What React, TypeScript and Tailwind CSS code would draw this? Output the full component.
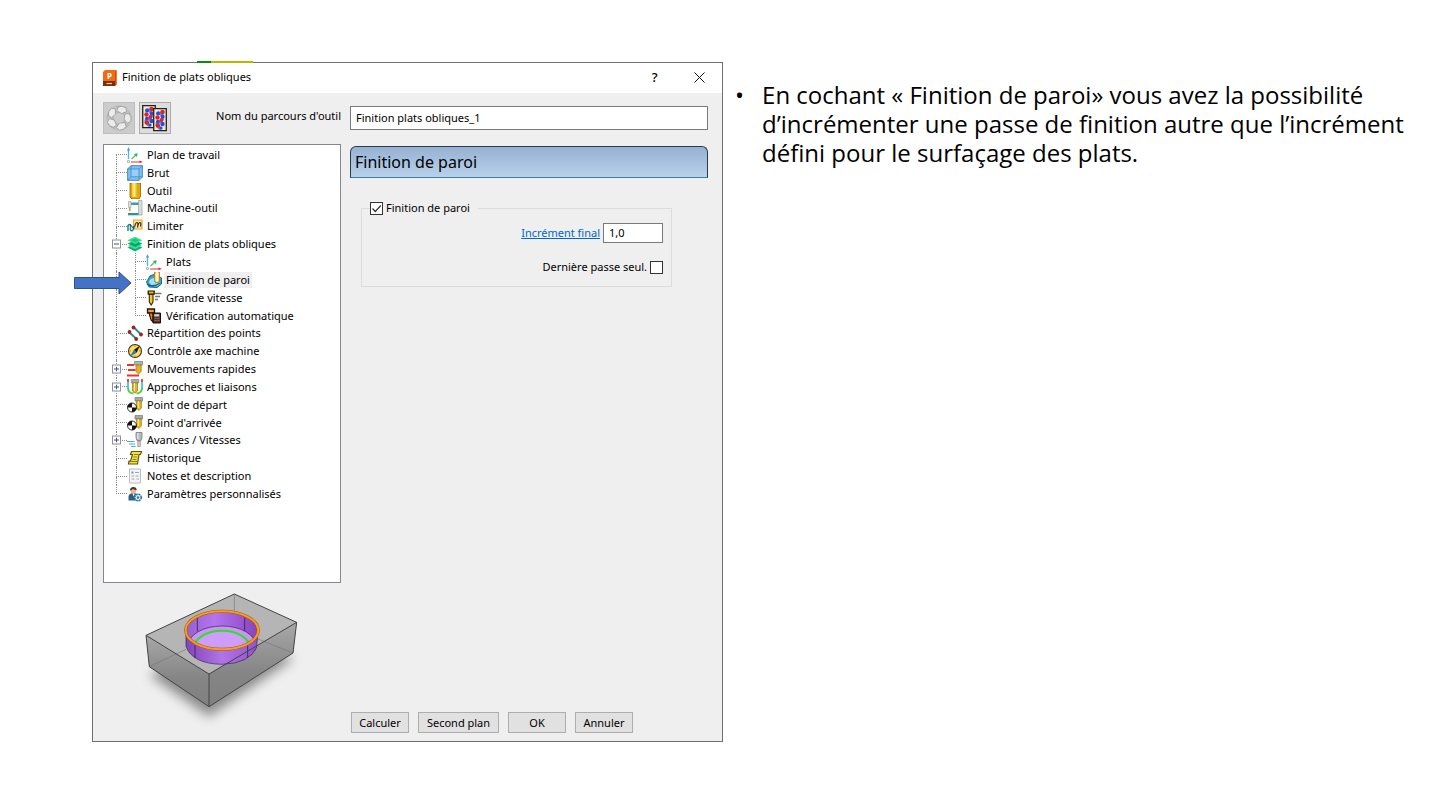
import React, { useState } from "react";

type IconName =
  | "axes" | "block" | "tool" | "machine" | "limit" | "layers" | "wall" | "speed" | "verify"
  | "points" | "compass" | "rapid" | "leads" | "start" | "feeds" | "history" | "notes" | "user";

type Item = {
  label: string;
  icon: IconName;
  level?: 2;
  toggle?: "+" | "-";
  first?: boolean;
  last?: boolean;
  selected?: boolean;
};

const items: Item[] = [
  { label: "Plan de travail", icon: "axes", first: true },
  { label: "Brut", icon: "block" },
  { label: "Outil", icon: "tool" },
  { label: "Machine-outil", icon: "machine" },
  { label: "Limiter", icon: "limit" },
  { label: "Finition de plats obliques", icon: "layers", toggle: "-" },
  { label: "Plats", icon: "axes", level: 2 },
  { label: "Finition de paroi", icon: "wall", level: 2, selected: true },
  { label: "Grande vitesse", icon: "speed", level: 2 },
  { label: "Vérification automatique", icon: "verify", level: 2, last: true },
  { label: "Répartition des points", icon: "points" },
  { label: "Contrôle axe machine", icon: "compass" },
  { label: "Mouvements rapides", icon: "rapid", toggle: "+" },
  { label: "Approches et liaisons", icon: "leads", toggle: "+" },
  { label: "Point de départ", icon: "start" },
  { label: "Point d'arrivée", icon: "start" },
  { label: "Avances / Vitesses", icon: "feeds", toggle: "+" },
  { label: "Historique", icon: "history" },
  { label: "Notes et description", icon: "notes" },
  { label: "Paramètres personnalisés", icon: "user", last: true },
];

const drawings: Record<IconName, React.ReactNode> = {
  axes: (
    <>
      <path d="M1.500 12V2" stroke="#4fb0f2" strokeWidth="1.300" />
      <path d="M0 3.400 1.500.2 3 3.400z" fill="#2f9cea" />
      <path d="M4 15h9" stroke="#f05050" strokeWidth="1.200" />
      <path d="m12.500 13.400 3.500 1.600-3.500 1z" fill="#e02020" />
      <path d="M4.500 12 9 8" stroke="#3cc46c" strokeWidth="1.200" />
      <path d="m7 7 3.800-.8L9.700 10z" fill="#2bb45c" />
      <path d="M.5 13.500h2v2h-2z" fill="#fff" stroke="#aaa" strokeWidth=".8" />
    </>
  ),
  block: (
    <>
      <path d="M.6 4 4 .6h11.400V12L12 15.400H.6z" fill="#7cc0f7" stroke="#3f86bd" strokeWidth=".9" />
      <path d="M4 4h8v8H4z" fill="#98d0fa" />
      <path d="M.6 4H12v11.400M12 4 15.400.8M4 .8v11h11.400M4 11.800.6 15.400" fill="none" stroke="#4a8fc4" strokeWidth=".9" />
    </>
  ),
  tool: (
    <>
      <path d="M3 0h10.500v13.500Q13 16 10.500 16H6q-2.500 0-3-2.500z" fill="#e0a80e" stroke="#8a6508" strokeWidth=".8" />
      <path d="M5 0h4.500v14H6.500Q5 14 5 13z" fill="#f8d23a" />
      <path d="M6.500 0h1.500v13.500H6.500z" fill="#fff0a0" />
    </>
  ),
  machine: (
    <>
      <path d="M11.500.5h3.500V15H11.500z" fill="#d9dcde" stroke="#9a9fa3" strokeWidth=".7" />
      <path d="M4 2.500h7.500V5H4z" fill="#36a0a2" />
      <path d="M1.500 1.500H4v6H1.500z" fill="#e2e2e2" stroke="#999" strokeWidth=".6" />
      <path d="M2 7.500h1.500V11H2z" fill="#e58b2d" />
      <path d="M1 13h10.500v2.300H1z" fill="#2a9698" />
    </>
  ),
  limit: (
    <>
      <path d="M6.500 2h8.500v9H6.500z" fill="#fce3a0" stroke="#eba724" strokeWidth="1.200" />
      <path d="M7.500 9.500q1-5 2.500-5t.5 5q1-5 2.500-5t.5 4" fill="none" stroke="#333" strokeWidth="1.200" />
      <path d="M1 13V7.500q2-2 2.500.5v4q1.500 2 3-1V8" fill="none" stroke="#178c8e" strokeWidth="1.500" />
      <path d="m3 6 4 5" stroke="#334" />
    </>
  ),
  layers: (
    <>
      <path d="m8 8.500 7.500 3L8 15.500.5 11.500z" fill="#12a985" />
      <path d="m8 6.500 7 3.200-7 3.500-7-3.500z" fill="#36e67c" />
      <path d="m8 4.500 7.500 3L8 11 .5 7.500z" fill="#10a07c" />
      <path d="m8 .8 7.500 3.400L8 8 .5 4.200z" fill="#2fe684" />
      <path d="m8 2.500 4 1.700-4 2-4-2z" fill="#1ec489" />
    </>
  ),
  wall: (
    <>
      <path d="M.5 10 4 4l5-2 6.500 4v6L11 15.500 3 15z" fill="#3ba4ce" stroke="#17688e" />
      <path d="M3 10q1-4 6-4v5q4 0 5-2v3q-4 4-9 1z" fill="#a5e1f2" />
      <path d="M1 12q6 4 13-1" fill="none" stroke="#126488" strokeWidth="1.400" />
      <path d="M8.500 0h5v9.500q-2.500 2-5 0z" fill="#f8d878" stroke="#a97712" strokeWidth=".8" />
      <path d="M10.300 0h1.500v9.500h-1.500z" fill="#fff" />
    </>
  ),
  speed: (
    <>
      <path d="M2.200 1h6v3.200h-6z" fill="#e8b920" stroke="#17130a" strokeWidth="1.200" />
      <path d="M3.300 4.500H7v7.500l-1.800 3L3.300 12z" fill="#f4cb20" stroke="#332a0c" strokeWidth="1.100" />
      <path d="M9 3.500h6.500M9 6.500h5M9 9.500h3" stroke="#777" strokeWidth="1.400" />
    </>
  ),
  verify: (
    <>
      <path d="M1.500 1h7v4h-7z" fill="#ff9830" stroke="#1c1712" strokeWidth="1.300" />
      <path d="M3 5h4v9l-2-2z" fill="#f47a20" stroke="#1c1712" strokeWidth="1.100" />
      <path d="M7 5h7.500v10H7z" fill="#413935" stroke="#15110f" />
      <path d="M8.200 6.200h5v2.300h-5z" fill="#d9d4ce" />
      <path d="M8.500 10.500h5m-5 2h5" stroke="#ea573a" strokeWidth="1.100" strokeDasharray="1.200 .7" />
    </>
  ),
  points: (
    <>
      <path d="M2.500 7.500 9 13.500M7 2.500l7 7" stroke="#229396" strokeWidth="2" />
      <circle cx="2.500" cy="7" r="1.900" fill="#a81c22" />
      <circle cx="6.500" cy="2.500" r="1.900" fill="#a81c22" />
      <circle cx="14" cy="9.500" r="1.900" fill="#a81c22" />
      <circle cx="9.200" cy="14" r="1.900" fill="#a81c22" />
    </>
  ),
  compass: (
    <>
      <circle cx="8" cy="8" r="6.500" fill="#ffdc55" stroke="#3a3425" strokeWidth="1.100" />
      <path d="M8 2.600v1M8 12.400v1M2.600 8h1M12.400 8h1" stroke="#8a6a14" />
      <path d="m13 2.500-3.400 7.200L7 6.800z" fill="#181818" />
      <path d="m3 13.500 4-6.700 2.600 2.900z" fill="#2674c5" />
    </>
  ),
  rapid: (
    <>
      <path d="M7.500.5h8v3.500h-8z" fill="#b4b4b4" stroke="#777" strokeWidth=".7" />
      <path d="M9 4h5.200v6.500L11.500 13 9 10.500z" fill="#e5b322" stroke="#92710e" strokeWidth=".7" />
      <path d="M0 4h7M1 9h7.500M0 14.500h12" stroke="#ee3425" strokeWidth="1.800" />
    </>
  ),
  leads: (
    <>
      <path d="M1 1v9M15 1v9" stroke="#22cbd9" strokeWidth="1.700" />
      <path d="M1 9q0 5 5.500 5.500M15 9q0 5-5.500 5.500" fill="none" stroke="#54cd36" strokeWidth="1.800" />
      <path d="M1 0v3M15 0v3" stroke="#ee3524" strokeWidth="1.700" />
      <path d="M4.300.5h7.500V4H4.300z" fill="#aaa" stroke="#777" strokeWidth=".6" />
      <path d="M5.500 4h5v8L8 14.200 5.500 12z" fill="#e8b426" stroke="#94710c" strokeWidth=".7" />
      <path d="M7 4h1v8H7z" fill="#fff5b8" />
    </>
  ),
  start: (
    <>
      <path d="M8 .5h7.500V4H8z" fill="#a9a9a9" stroke="#777" strokeWidth=".7" />
      <path d="M9.300 4h5v7L12 13.500 9.300 11z" fill="#e9b827" stroke="#8b6d12" strokeWidth=".7" />
      <path d="M10.800 4h1v7h-1z" fill="#fff09a" />
      <circle cx="5" cy="10.500" r="4.500" fill="#fff" stroke="#111" strokeWidth=".9" />
      <path d="M5 10.500V6A4.500 4.500 0 0 0 .5 10.500zM5 10.500h4.500A4.500 4.500 0 0 1 5 15z" fill="#111" />
    </>
  ),
  feeds: (
    <>
      <path d="M9 .5h6v5l-1 3h-4l-1-3z" fill="#b7bbc0" stroke="#777" strokeWidth=".8" />
      <path d="M10.800 9h2.500v5.500h-2.500z" fill="#d1d3d5" stroke="#888" strokeWidth=".7" />
      <path d="M10.800 1v6" stroke="#eee" strokeWidth="1.200" />
      <path d="M0 9.500h7.500M2 12h6M4 14.500h4.500" stroke="#48a5eb" strokeWidth="1.200" />
    </>
  ),
  history: (
    <>
      <path d="M4.500 1.500h10l-1 3h-1.500L10.500 14H1.500l.5-3h1.500l2-6.500h-2z" fill="#f5e33a" stroke="#5c5612" strokeWidth="1.200" />
      <path d="M7 4.500h4M6.300 7h4M5.500 9.500h4M2 11.500h8" stroke="#7c721e" strokeWidth=".9" />
    </>
  ),
  notes: (
    <>
      <path d="M2.500 1h11v14h-11z" fill="#f3f5f7" stroke="#b8bec4" />
      <path d="M4.500 3.500h2v2h-2z" fill="#7496bb" />
      <path d="M8 4.500h4M4.500 8H7m1.500 0h3M4.500 11h3m2 0H12" stroke="#9ea7b0" />
    </>
  ),
  user: (
    <>
      <path d="M1.500 14.500V10q1-3 5-3t5 4v3.500z" fill="#2d6089" />
      <circle cx="6.300" cy="4.500" r="3" fill="#eab68c" />
      <path d="M3 4.500Q3 1 6.300 1t3.400 3Q7 4.200 6 2.800 5 4.300 3 4.500" fill="#493629" />
      <path d="m5.500 7.500 1 3 1.200-3z" fill="#fff" />
      <circle cx="11" cy="11.500" r="3.300" fill="#e6f1f8" stroke="#286fa3" strokeWidth="1.500" strokeDasharray="1.900 .7" />
      <circle cx="11" cy="11.500" r="1.200" fill="#286fa3" />
    </>
  ),
};

function TreeIcon({ name }: { name: IconName }) {
  return (
    <svg viewBox="0 0 16 16" className="size-4 shrink-0" fill="none" aria-hidden="true">
      {drawings[name]}
    </svg>
  );
}

/* Dotted branch: vertical line on the left, horizontal line at mid height. */
function Branch({ first, last, toggle }: Pick<Item, "first" | "last" | "toggle">) {
  return (
    <span className="relative flex w-[11px] shrink-0 flex-col self-stretch">
      <span className={`flex-1 border-b border-dotted border-[#8a8a8a] ${first ? "" : "border-l"}`} />
      <span className={`flex-1 border-dotted border-[#8a8a8a] ${last ? "" : "border-l"}`} />
      {toggle && (
        <button
          type="button"
          aria-label={toggle === "+" ? "Développer" : "Réduire"}
          className="absolute top-1/2 -left-1 flex size-[9px] -translate-y-1/2 items-center justify-center border border-[#919191] bg-white"
        >
          <svg viewBox="0 0 5 5" className="size-[5px]" aria-hidden="true">
            <path d={toggle === "+" ? "M0 2.500h5M2.500 0v5" : "M0 2.500h5"} stroke="#3a52a0" />
          </svg>
        </button>
      )}
    </span>
  );
}

function TreeRow({ item }: { item: Item }) {
  return (
    <li role="treeitem" aria-level={item.level ?? 1} aria-selected={!!item.selected} className="relative flex min-h-0 flex-1 items-center">
      {item.level && <span className="w-[19px] shrink-0 self-stretch border-l border-dotted border-[#8a8a8a]" />}
      <Branch first={item.first} last={item.last} toggle={item.toggle} />
      <TreeIcon name={item.icon} />
      <span className={`ml-[2px] px-[2px] leading-4 whitespace-nowrap ${item.selected ? "bg-[#efefef]" : ""}`}>{item.label}</span>
      {item.selected && (
        <svg viewBox="0 0 58 24" className="absolute top-0 -left-[42px] h-6 w-[58px]" aria-hidden="true">
          <path d="M.5 6.500H45V1l12 11-12 11v-5.500H.5z" fill="#4472c4" stroke="#2f528f" />
        </svg>
      )}
    </li>
  );
}

function PartPreview() {
  return (
    <svg viewBox="39 24 714 474" className="w-full" role="img" aria-label="Aperçu de la pièce">
      <defs>
        <filter id="soft" x="-30%" y="-30%" width="160%" height="160%">
          <feGaussianBlur stdDeviation="17" />
        </filter>
        <linearGradient id="wallIn" x1="0" x2="1">
          <stop offset="0" stopColor="#9460cf" />
          <stop offset=".4" stopColor="#b474ef" />
          <stop offset="1" stopColor="#8743bd" />
        </linearGradient>
        <linearGradient id="wallOut" x1="0" x2="1">
          <stop offset="0" stopColor="#8045b8" />
          <stop offset=".5" stopColor="#b073e8" />
          <stop offset="1" stopColor="#9055c8" />
        </linearGradient>
        <linearGradient id="side" x1="0" x2="0" y1="0" y2="1">
          <stop offset="0" stopColor="#a8a8a8" />
          <stop offset=".6" stopColor="#858585" />
          <stop offset="1" stopColor="#808080" />
        </linearGradient>
        <clipPath id="bore"><ellipse cx="396" cy="166" rx="108" ry="57" /></clipPath>
      </defs>
      <path d="M178 300 400 190 612 250 357 425z" fill="#555" opacity=".65" filter="url(#soft)" />
      <path d="M168 181 433 57 620 142 609 234 357 395 178 275z" fill="#b5b5b5" />
      <path d="M168 181 357 297v98L178 275z" fill="url(#side)" />
      <path d="M357 297 620 142l-11 92-252 161z" fill="url(#side)" />
      <path d="M433 57v90M178 275l110-52M609 234l-105-42" stroke="#777" strokeWidth="2" />
      <path d="M288 166v48q18 52 108 54 85-3 104-52l4-50z" fill="url(#wallOut)" stroke="#38204e" strokeWidth="2" />
      <ellipse cx="396" cy="166" rx="108" ry="57" fill="url(#wallIn)" />
      <g clipPath="url(#bore)">
        <ellipse cx="396" cy="211" rx="101" ry="58" fill="#c597ee" stroke="#39204d" strokeWidth="2" />
        <ellipse cx="396" cy="220" rx="84" ry="53" fill="#cd9df7" stroke="#31df23" strokeWidth="6" />
      </g>
      <path d="M322 126v43M464 128v40M315 211v38M473 211v37" stroke="#38204e" strokeWidth="2.500" />
      <ellipse cx="396" cy="166" rx="109" ry="57" fill="none" stroke="#9b5a11" strokeWidth="9" />
      <ellipse cx="396" cy="166" rx="109" ry="57" fill="none" stroke="#ff9c16" strokeWidth="6" />
      <path d="M168 181 433 57 620 142 609 234 357 395 178 275zM168 181l189 116 263-155M357 297v98" fill="none" stroke="#444" strokeWidth="3" strokeLinejoin="round" />
    </svg>
  );
}

function Check({ id, checked, onChange }: { id: string; checked: boolean; onChange: (v: boolean) => void }) {
  return (
    <span className="relative flex size-[13px] shrink-0">
      <input
        id={id}
        type="checkbox"
        checked={checked}
        onChange={(e) => onChange(e.target.checked)}
        className="peer size-[13px] appearance-none border border-[#333] bg-white"
      />
      <svg viewBox="0 0 13 13" className="pointer-events-none absolute inset-0 hidden peer-checked:block" fill="none" aria-hidden="true">
        <path d="m2.500 6.500 2.800 3L10.800 3.500" stroke="#333" strokeWidth="1.200" />
      </svg>
    </span>
  );
}

function RecycleIcon() {
  return (
    <svg viewBox="0 0 28 28" className="size-7" aria-hidden="true">
      <circle cx="14" cy="14" r="9" fill="none" stroke="#b4b4b4" strokeWidth="7" />
      {[20, 92, 164, 236, 308].map((a) => (
        <g key={a} transform={`rotate(${a} 14 14)`}>
          <path d="M9.500 8V4l3-2h4.500l2 3.500-4 3.500z" fill="#ebebeb" stroke="#a2a2a2" strokeWidth=".9" />
          <path d="m18 2 2.500 3.500-3 3" fill="none" stroke="#c4c4c4" strokeWidth="1.300" />
        </g>
      ))}
      <circle cx="14" cy="14" r="4.500" fill="#cccccc" />
    </svg>
  );
}

function CopyIcon() {
  const panel = (
    <>
      <path d="M.7.700h12.600v22H.7z" fill="#f4e9c8" stroke="#222" strokeWidth="1.300" />
      <path d="M4.500 4.500q6 2 5.500 5t-6 6q.5 4 4 5" stroke="#5a8ce8" strokeWidth="3" />
      <g fill="#e4202c">
        <circle cx="9.500" cy="4" r="2.300" />
        <circle cx="4.500" cy="9.500" r="2.200" />
        <circle cx="8.500" cy="12" r="2" />
        <circle cx="4.800" cy="17.500" r="2.300" />
      </g>
      <g fill="#2450dc">
        <circle cx="5" cy="5.500" r="2" />
        <circle cx="9.500" cy="8.500" r="1.900" />
        <circle cx="4.800" cy="13.500" r="1.800" />
        <circle cx="9.500" cy="16" r="2.200" />
        <circle cx="8" cy="20" r="1.600" />
      </g>
    </>
  );
  return (
    <svg viewBox="0 0 28 28" className="size-7" fill="none" aria-hidden="true">
      <g transform="translate(1 1)">{panel}</g>
      <g transform="translate(12 4)">{panel}</g>
    </svg>
  );
}

function DialogButton({ children, wide }: { children: React.ReactNode; wide?: boolean }) {
  return (
    <button
      type="button"
      className={`h-[21px] border border-[#adadad] bg-[#e1e1e1] text-center leading-4 whitespace-nowrap ${wide ? "w-[81px]" : "w-[58px]"}`}
    >
      {children}
    </button>
  );
}

export default function App() {
  const [name, setName] = useState("Finition plats obliques_1");
  const [wall, setWall] = useState(true);
  const [step, setStep] = useState("1,0");
  const [lastOnly, setLastOnly] = useState(false);

  return (
    <main className="flex min-h-screen items-start bg-white pt-[62px] pb-14 pl-[92px] text-black">
      <section
        aria-labelledby="dialog-title"
        className="relative flex min-h-[680px] min-w-0 flex-[630_1_0%] flex-col border border-[#6f6f6f] bg-[#efefef] font-['Noto_Sans',sans-serif] text-[11px]"
      >
        <span className="absolute -top-[2px] left-[104px] flex h-[2px] w-14">
          <span className="w-[14px] bg-[#0a8a12]" />
          <span className="flex-1 bg-[#b9b800]" />
        </span>
        <header className="flex h-[30px] items-center bg-white pb-px pl-[10px]">
          <svg viewBox="0 0 14 16" className="h-4 w-[14px]" aria-hidden="true">
            <path d="M2 0h11.500v14.500L12 16H0V2z" fill="#f26a12" />
            <path d="M0 11h12v5H0z" fill="#7b300c" />
            <path d="M12 2 13.500 0v14.500L12 16z" fill="#c94e08" />
            <text x="6.500" y="8.800" textAnchor="middle" fontSize="8" fontWeight="700" fill="#fff">P</text>
            <path d="M3.500 13.500h5.500" stroke="#e8c5b0" strokeWidth="1.200" />
          </svg>
          <h1 id="dialog-title" className="ml-[5px] flex-1">Finition de plats obliques</h1>
          <button type="button" aria-label="Aide" className="w-[45px] text-[13px] font-medium">?</button>
          <button type="button" aria-label="Fermer" className="flex w-[45px] justify-center">
            <svg viewBox="0 0 11 11" className="size-[11px]" aria-hidden="true">
              <path d="m.5.500 10 10M10.500.500l-10 10" stroke="#111" />
            </svg>
          </button>
        </header>

        <div className="flex flex-1 gap-[9px] pt-[9px] pr-[14px] pl-[10px]">
          <div className="flex w-[238px] shrink-0 flex-col">
            <div className="flex h-8 items-center gap-1">
              <button type="button" aria-label="Recycler" disabled className="flex size-8 items-center justify-center border border-[#bfbfbf] bg-[#cccccc]">
                <RecycleIcon />
              </button>
              <button type="button" aria-label="Copier" className="flex size-8 items-center justify-center border border-[#adadad] bg-[#dddddd]">
                <CopyIcon />
              </button>
              <label htmlFor="path-name" className="flex-1 pb-1 text-right whitespace-nowrap">Nom du parcours d'outil</label>
            </div>
            <div className="mt-[10px] h-[439px] border border-[#828790] bg-white pt-px pl-3">
              <ul role="tree" className="flex h-[357px] flex-col">
                {items.map((item) => (
                  <TreeRow key={item.label} item={item} />
                ))}
              </ul>
            </div>
            <PartPreview />
          </div>

          <div className="flex min-w-0 flex-1 flex-col pb-2">
            <input
              id="path-name"
              value={name}
              onChange={(e) => setName(e.target.value)}
              className="mt-1 h-6 w-full border border-[#7a7a7a] bg-white px-[5px] pb-[2px]"
            />
            <h2 className="mt-4 h-8 rounded-t-md border border-[#2c3a48] border-b-[#2a83a8] bg-linear-to-b from-[#96b2d3] to-[#b9d1ea] pl-1 text-[16px] leading-[31px]">
              Finition de paroi
            </h2>
            <fieldset className="mt-[22px] mr-[36px] ml-[11px] flex flex-col items-end border border-[#dcdcdc] px-2 pb-[11px]">
              <legend className="flex items-center gap-[3px] pr-2">
                <Check id="wall" checked={wall} onChange={setWall} />
                <label htmlFor="wall" className="leading-4">Finition de paroi</label>
              </legend>
              <div className="mt-[7px] flex items-center gap-[3px]">
                <a href="#increment" id="step-label" className="text-[#0066cc] underline">Incrément final</a>
                <input
                  aria-labelledby="step-label"
                  value={step}
                  onChange={(e) => setStep(e.target.value)}
                  className="h-5 w-[60px] border border-[#7a7a7a] bg-white px-[5px] pb-px"
                />
              </div>
              <div className="mt-4 flex items-center gap-[3px]">
                <label htmlFor="last-pass" className="leading-4">Dernière passe seul.</label>
                <Check id="last-pass" checked={lastOnly} onChange={setLastOnly} />
              </div>
            </fieldset>
            <div className="mt-auto ml-px flex gap-[9px]">
              <DialogButton>Calculer</DialogButton>
              <DialogButton wide>Second plan</DialogButton>
              <DialogButton>OK</DialogButton>
              <DialogButton>Annuler</DialogButton>
            </div>
          </div>
        </div>
      </section>

      <ul className="min-w-0 flex-[717_1_0%]">
        <li className="flex pt-[18px] pr-8 pl-3 font-['Open_Sans',sans-serif] text-[24px] leading-[29px]">
          <span aria-hidden="true" className="w-[27px] shrink-0">•</span>
          <p>
            En cochant « Finition de paroi» vous avez la possibilité d’incrémenter une passe de finition autre que l’incrément défini pour le surfaçage des plats.
          </p>
        </li>
      </ul>
    </main>
  );
}
